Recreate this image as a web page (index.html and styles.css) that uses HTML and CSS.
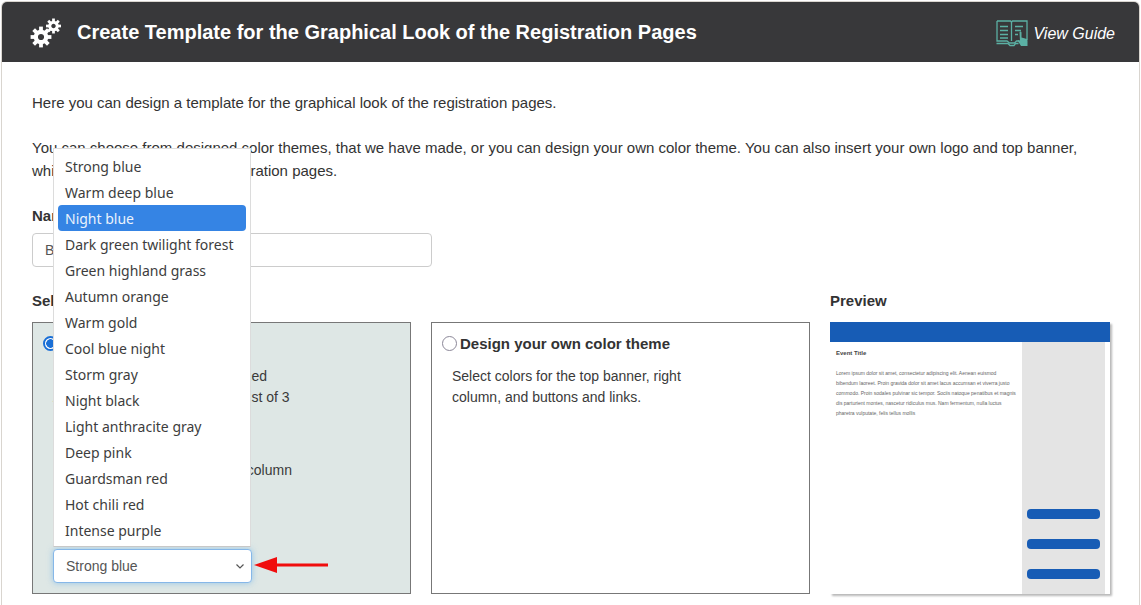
FILE: index.html
```html
<!DOCTYPE html>
<html lang="en">
<head>
<meta charset="utf-8">
<title>Create Template</title>
<link rel="stylesheet" href="styles.css">
</head>
<body>
<div class="window">
  <header class="topbar">
    <svg class="gears" width="36" height="34" viewBox="0 0 36 34">
      <defs>
        <g id="tooth"><rect x="-1.9" y="-10.4" width="3.8" height="5" fill="#fff"/></g>
        <g id="gear">
          <use href="#tooth"/><use href="#tooth" transform="rotate(45)"/><use href="#tooth" transform="rotate(90)"/><use href="#tooth" transform="rotate(135)"/>
          <use href="#tooth" transform="rotate(180)"/><use href="#tooth" transform="rotate(225)"/><use href="#tooth" transform="rotate(270)"/><use href="#tooth" transform="rotate(315)"/>
          <circle r="5.2" fill="none" stroke="#fff" stroke-width="4.2"/>
        </g>
      </defs>
      <use href="#gear" transform="translate(13 22)"/>
      <use href="#gear" transform="translate(25.5 11) scale(.72)"/>
    </svg>
    <h1 class="title">Create Template for the Graphical Look of the Registration Pages</h1>
    <a class="guide">
      <svg class="book" width="32" height="28" viewBox="0 0 32 28" fill="none" stroke="#5bb0a4" stroke-width="1.3">
        <path d="M1 2h13.500l1 1 1-1H31v19" />
        <path d="M1 2v20h10l2.500 2h5l2-2h3"/>
        <path d="M0.500 24.500h11.500l2 2h4l1.500-2h3"/>
        <path d="M15.500 3v19"/>
        <path d="M4 7.500h8M4 11.500h8M4 15.500h8M4 19h8M19 7.500h8M19 11.500h6M19 15.500h3"/>
        <path d="M23.500 13.500c0-1.500 2-1.500 2 0v5l4.500 1.200c1.200.4 1.500 1 1.500 2.300v5h-6.500l-3.500-5.500 1.500-.5 1 1z" fill="#5bb0a4" stroke="none"/>
      </svg>
      <span class="guide-label">View Guide</span>
    </a>
  </header>
  <main class="content">
    <p class="intro">Here you can design a template for the graphical look of the registration pages.</p>
    <p class="intro">You can choose from designed color themes, that we have made, or you can design your own color theme. You can also insert your own logo and top banner, which will be shown on the registration pages.</p>
    <label class="field-label">Name</label>
    <div class="name-input">Blue template</div>
    <div class="columns">
      <section class="col-theme">
        <h2 class="heading">Select color theme</h2>
        <div class="theme-boxes">
          <div class="theme-box selected">
            <label class="theme-title"><input type="radio" name="theme" checked><span>Designed color theme</span></label>
            <p class="theme-text">Select a color theme, we designed<br>Any of these color themes consist of 3</p>
            <p class="theme-text list">colors for top banner, and right column</p>
            <div class="fake-select">
              <span>Strong blue</span>
              <svg class="chev" width="10" height="7" viewBox="0 0 10 7" fill="none" stroke="#555" stroke-width="1.2"><path d="M1.500 1.500 5 5l3.500-3.500"/></svg>
            </div>
            <svg class="red-arrow" width="76" height="18" viewBox="0 0 76 18"><path d="M0 9 23 1v6.500h51v3H23V17z" fill="#f00d0d"/></svg>
          </div>
          <div class="theme-box">
            <label class="theme-title"><input type="radio" name="theme"><span>Design your own color theme</span></label>
            <p class="theme-text">Select colors for the top banner, right<br>column, and buttons and links.</p>
          </div>
        </div>
      </section>
      <section class="col-preview">
        <h2 class="heading">Preview</h2>
        <div class="preview">
          <div class="pv-banner"></div>
          <div class="pv-body">
            <div class="pv-main">
              <div class="pv-title">Event Title</div>
              <p class="pv-text">Lorem ipsum dolor sit amet, consectetur adipiscing elit. Aenean euismod bibendum laoreet. Proin gravida dolor sit amet lacus accumsan et viverra justo commodo. Proin sodales pulvinar sic tempor. Sociis natoque penatibus et magnis dis parturient montes, nascetur ridiculus mus. Nam fermentum, nulla luctus pharetra vulputate, felis tellus mollis</p>
            </div>
            <div class="pv-side">
              <div class="pv-btn"></div>
              <div class="pv-btn"></div>
              <div class="pv-btn"></div>
            </div>
          </div>
        </div>
      </section>
    </div>
  </main>
  <ul class="popup">
    <li>Strong blue</li>
    <li>Warm deep blue</li>
    <li class="active">Night blue</li>
    <li>Dark green twilight forest</li>
    <li>Green highland grass</li>
    <li>Autumn orange</li>
    <li>Warm gold</li>
    <li>Cool blue night</li>
    <li>Storm gray</li>
    <li>Night black</li>
    <li>Light anthracite gray</li>
    <li>Deep pink</li>
    <li>Guardsman red</li>
    <li>Hot chili red</li>
    <li>Intense purple</li>
  </ul>
</div>
</body>
</html>
```
FILE: styles.css
```css
* { box-sizing: border-box; }
html, body { height: 100%; }
body {
  margin: 0;
  overflow: hidden;
  background: #fff;
  color: #333;
  font-family: "Liberation Sans", Arial, sans-serif;
  font-size: 15px;
  line-height: 23px;
}
.window {
  position: relative;
  height: 604px;
  margin: 1px 1px 0;
  border: 1px solid #d9d5cf;
  border-bottom: 0;
  border-radius: 6px 6px 0 0;
  overflow: hidden;
}
.topbar {
  display: flex;
  align-items: center;
  height: 60px;
  padding: 0 24px 0 25px;
  background: #38383a;
  color: #fff;
}
.gears { flex: none; margin: 0 0 0 1px; }
.title {
  flex: 1;
  margin: 0 0 0 13px;
  font-size: 20px;
  font-weight: 700;
  line-height: 60px;
  white-space: nowrap;
}
.guide { display: flex; align-items: center; gap: 5px; }
.book { flex: none; margin-top: 2px; }
.guide-label { padding-top: 2px; font-style: italic; font-size: 16px; }
.content { padding: 29px 30px 0; }
.intro { margin: 0 0 22px; }
.field-label { display: block; margin-top: 0; font-weight: 700; }
.name-input {
  width: 400px;
  height: 34px;
  margin-top: 6px;
  padding: 0 12px;
  border: 1px solid #ccc;
  border-radius: 4px;
  color: #555;
  font-size: 14px;
  line-height: 32px;
}
.columns { display: flex; gap: 20px; margin-top: 22px; }
.heading { margin: 0 0 10px; font-size: 15px; font-weight: 700; line-height: 23px; }
.theme-boxes { display: flex; gap: 20px; }
.theme-box {
  position: relative;
  width: 379px;
  height: 272px;
  padding: 9px 10px;
  border: 1px solid #777;
}
.theme-box.selected { background: #dee7e5; }
.theme-title { display: flex; align-items: center; gap: 3px; font-weight: 700; line-height: 23px; }
.theme-title input {
  appearance: none;
  width: 15px;
  height: 15px;
  margin: 0;
  border: 1px solid #8b8798;
  border-radius: 50%;
  background: #fff;
}
.theme-title input:checked {
  border: 2px solid #1a6fd6;
  background: radial-gradient(circle, #1a6fd6 0 4px, #fff 4.6px);
}
.theme-text { margin: 11px 0 0 10px; font-size: 14px; line-height: 21px; color: #3a3a3a; }
.theme-text.list { margin-top: 52px; }
.fake-select {
  position: absolute;
  left: 20px;
  top: 226px;
  display: flex;
  align-items: center;
  justify-content: space-between;
  width: 199px;
  height: 34px;
  padding: 0 6px 0 12px;
  background: #fff;
  border: 1px solid #86b7e8;
  border-radius: 4px;
  box-shadow: 0 0 6px rgba(102, 175, 233, .6);
  color: #555;
  font-size: 14px;
}
.chev { flex: none; }
.red-arrow { position: absolute; left: 221px; top: 233px; }
.col-preview { width: 280px; }
.preview {
  width: 280px;
  height: 272px;
  box-shadow: 2px 2px 2px rgba(0, 0, 0, .28);
  background: #fff;
}
.pv-banner { height: 20px; background: #175cb5; }
.pv-body { display: flex; height: 252px; padding-right: 5px; padding-left: 1px; }
.pv-main { flex: 1; padding: 6px 5px 0 5px; color: #666; }
.pv-title { font-size: 6px; font-weight: 700; line-height: 10px; color: #444; }
.pv-text { margin: 10px 0 0; font-size: 5px; line-height: 10px; }
.pv-side {
  display: flex;
  flex-direction: column;
  align-items: center;
  gap: 20px;
  width: 83px;
  padding: 167px 5px 0;
  background: #e4e4e4;
}
.pv-btn { width: 73px; height: 10px; border-radius: 4px; background: #175cb5; }
.popup {
  position: absolute;
  left: 51px;
  top: 146px;
  width: 198px;
  height: 399px;
  margin: 0;
  padding: 4px 4px 0;
  list-style: none;
  background: #fff;
  border: 1px solid #dcdcdc;
  border-bottom-color: #c8c8c8;
  color: #3d3d3d;
  font-family: "Noto Sans", sans-serif;
  font-size: 14px;
  line-height: 28px;
}
.popup li { height: 26px; padding: 0 7px; border-radius: 4px; white-space: nowrap; }
.popup li.active { background: #3584e4; color: #eaf2fc; }
```
